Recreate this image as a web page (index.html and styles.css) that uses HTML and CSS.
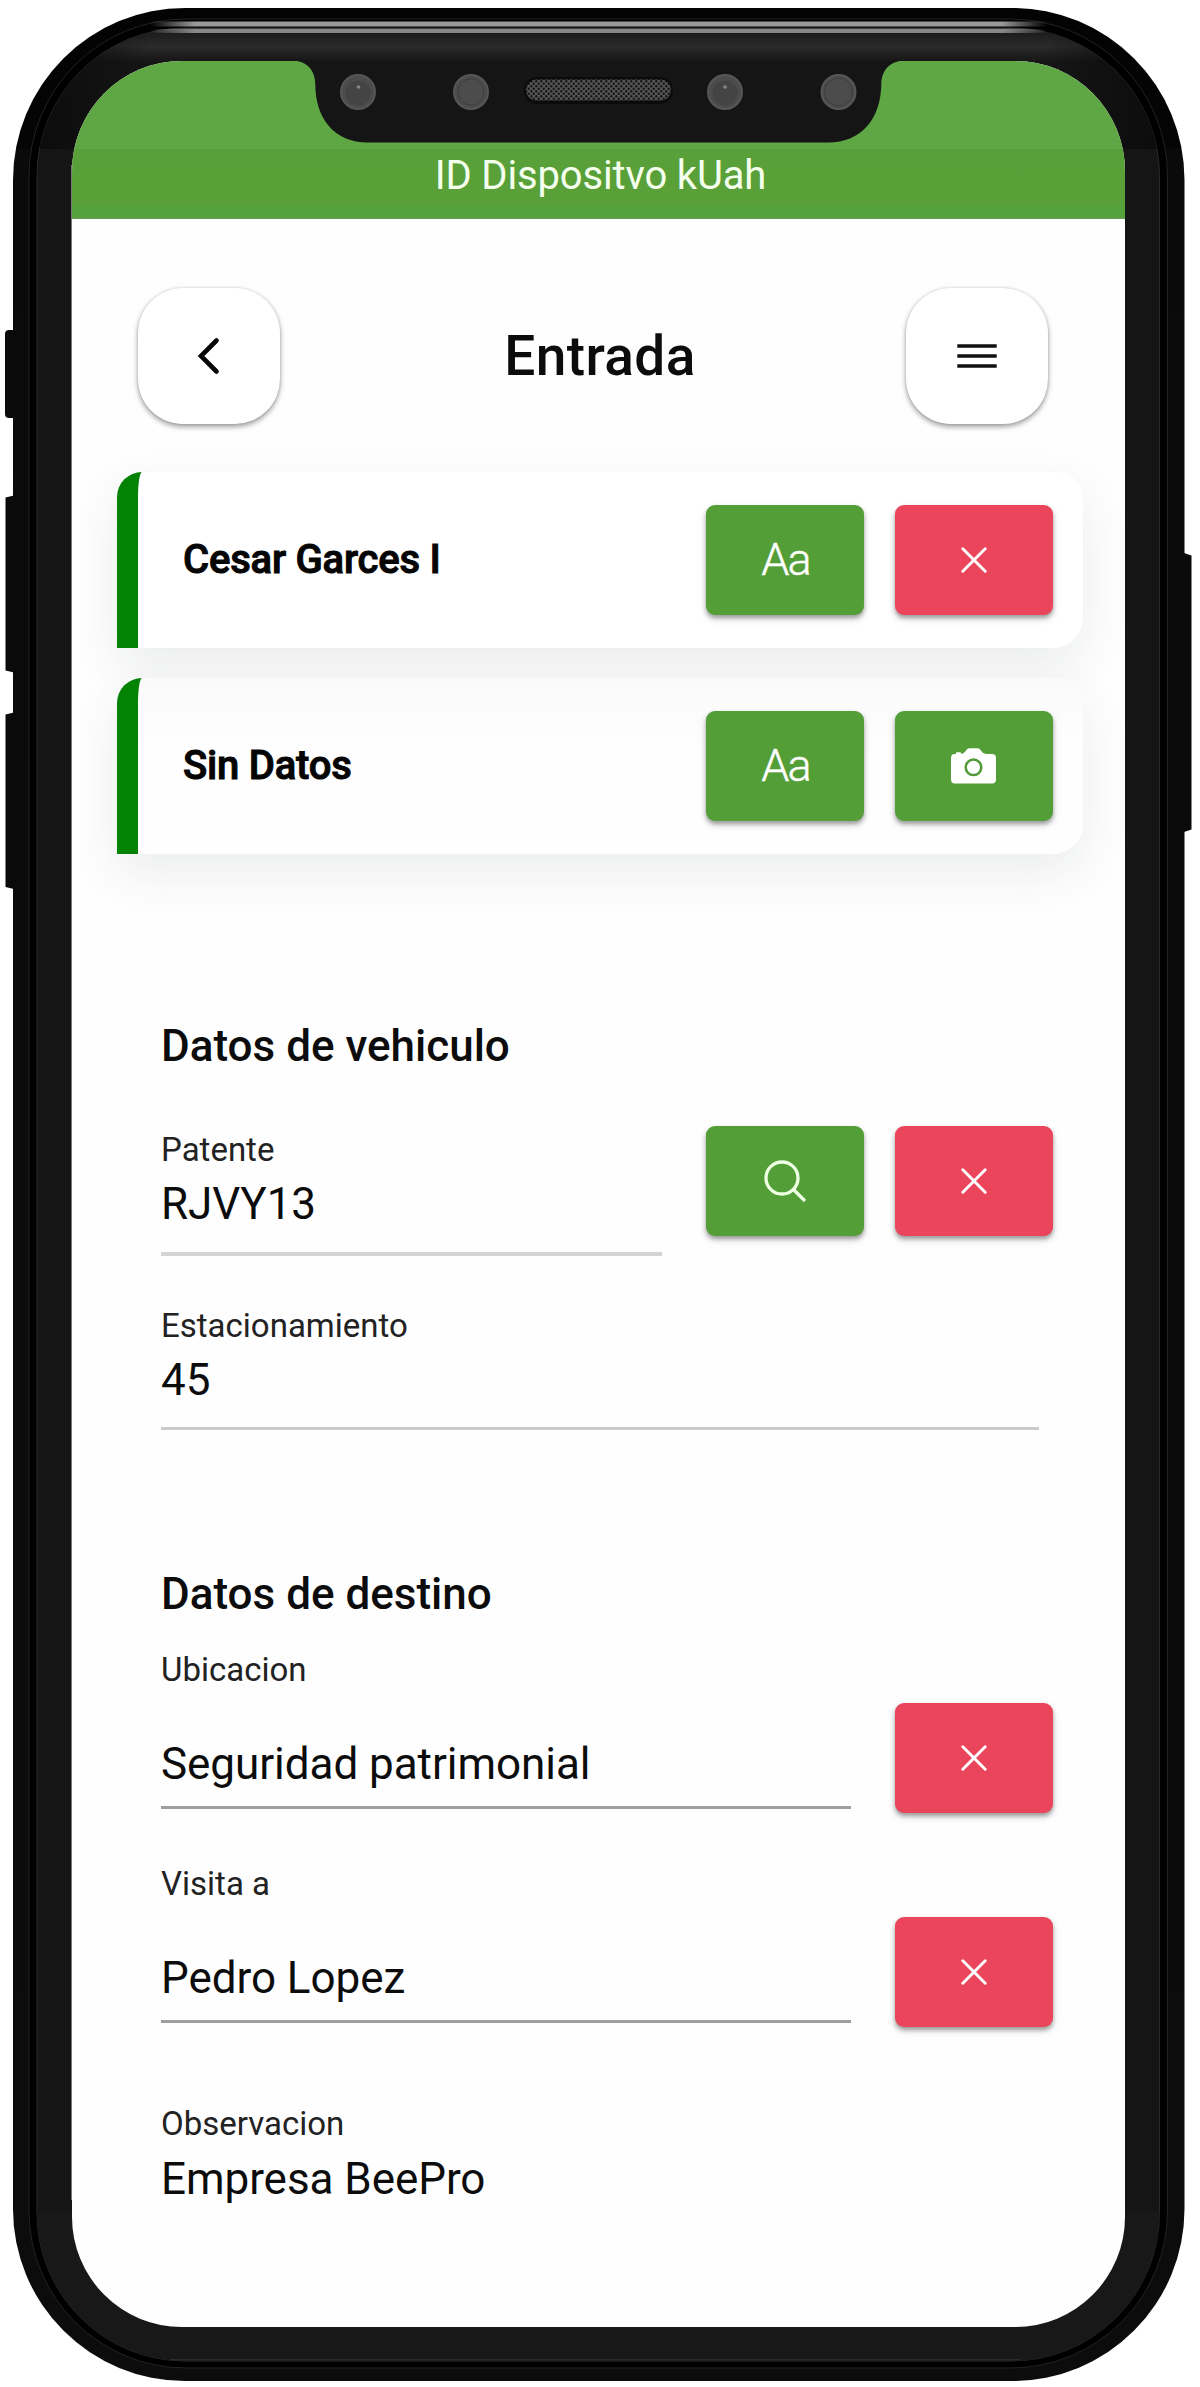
FILE: index.html
```html
<!DOCTYPE html>
<html lang="es">
<head>
<meta charset="utf-8">
<title>Entrada</title>
<link rel="stylesheet" href="styles.css">
</head>
<body>
<svg class="defs" aria-hidden="true">
  <symbol id="close" viewBox="0 0 26 26"><path d="M1.8 1.8 24.2 24.2M24.2 1.8 1.8 24.2" fill="none" stroke="currentColor" stroke-width="2.9" stroke-linecap="round"/></symbol>
</svg>
<div class="phone">
  <svg class="frame" viewBox="0 0 1200 2387" aria-hidden="true">
    <defs>
      <linearGradient id="shine" x1="0" x2="1" y1="0" y2="0"><stop offset="0" stop-color="#999" stop-opacity="0"/><stop offset=".05" stop-color="#999"/><stop offset=".95" stop-color="#999"/><stop offset="1" stop-color="#999" stop-opacity="0"/></linearGradient>
      <linearGradient id="bezel" x1="0" x2="0" y1="0" y2="1"><stop offset="0" stop-color="#444"/><stop offset=".13" stop-color="#1c1c1c"/><stop offset=".5" stop-color="#2b2b2b"/><stop offset=".95" stop-color="#151515"/><stop offset="1" stop-color="#151515"/></linearGradient>
      <linearGradient id="fade" x1="0" x2="1" y1="0" y2="0"><stop offset="0" stop-color="#0c0c0c"/><stop offset=".1" stop-color="#0c0c0c" stop-opacity="0"/><stop offset=".9" stop-color="#0c0c0c" stop-opacity="0"/><stop offset="1" stop-color="#0c0c0c"/></linearGradient>
      <linearGradient id="shell" gradientUnits="userSpaceOnUse" x1="0" x2="0" y1="8" y2="2381"><stop offset="0" stop-color="#030303"/><stop offset=".059" stop-color="#050505"/><stop offset=".0595" stop-color="#0a0a0a"/><stop offset="1" stop-color="#0c0c0c"/></linearGradient>
      <clipPath id="inner"><rect x="37" y="28" width="1122.500" height="2333" rx="148"/></clipPath>
    </defs>
    <rect x="5" y="330" width="14" height="88" rx="4" fill="#0b0b0b"/>
    <path d="M14 495.500 5.500 497.500V670.500L14 672.500zM14 712.500 5.500 714.500V887L14 889zM1184 553 1191.500 555.500V829.500L1184 832z" fill="#0a0a0a"/>
    <rect x="13" y="8" width="1171.500" height="2373" rx="172" fill="url(#shell)"/>
    <rect x="29" y="19" width="1138.500" height="2349" rx="157" fill="#000" stroke="#222"/>
    <rect x="37" y="28" width="1122.500" height="2333" rx="148" fill="#151515" stroke="#2a2a2a"/>
    <g clip-path="url(#inner)">
      <rect x="37" y="28" width="1123" height="36" fill="url(#bezel)"/>
      <rect x="37" y="28" width="1123" height="121" fill="url(#fade)"/>
      <rect x="37" y="2211" width="1123" height="150" fill="#181818"/>
      <rect x="170" y="2359" width="850" height="1.500" fill="#2c2c2c"/>
    </g>
    <rect x="150" y="21.500" width="897" height="5" fill="url(#shine)"/>
    <rect x="150" y="29" width="897" height="4" fill="url(#shine)" opacity=".85"/>
    <path d="M71.500 165V2200" stroke="#777" stroke-width="1"/>
  </svg>
  <main class="screen">
    <header class="device">ID Dispositvo kUah</header>
    <div class="toolbar">
      <button class="round" aria-label="Volver"><svg width="30" height="44" viewBox="0 0 30 44"><path d="M22.500 6.500 7 22 22.500 37.500" fill="none" stroke="#080808" stroke-width="4.600" stroke-linecap="round"/></svg></button>
      <h1>Entrada</h1>
      <button class="round" aria-label="Menu"><svg width="40" height="26" viewBox="0 0 40 26"><path d="M.3 3H39.700M.3 13H39.700M.3 23H39.700" stroke="#111" stroke-width="3.700"/></svg></button>
    </div>
    <section class="people">
      <article class="card">
        <span class="name">Cesar Garces I</span>
        <button class="btn green">Aa</button>
        <button class="btn red" aria-label="Quitar"><svg class="x"><use href="#close"/></svg></button>
      </article>
      <article class="card">
        <span class="name">Sin Datos</span>
        <button class="btn green">Aa</button>
        <button class="btn green" aria-label="Foto"><svg width="45" height="36" viewBox="0 0 45 36"><path d="M3.500 6H5V4.800Q5 4.200 5.600 4.200H9.400Q10 4.200 10 4.800V6Q13 5.500 14.500 3.300L16 1.300Q17 .3 18.500 .3H26.500Q28 .3 29 1.300L30.500 3.300Q32.200 6 35 6H41Q45 6 45 10V31.500Q45 35.500 41 35.500H4Q0 35.500 0 31.500V10Q0 6 3.500 6z" fill="#fff"/><circle cx="22.500" cy="19.300" r="7.800" fill="#fff" stroke="#52993a" stroke-width="2.500"/></svg></button>
      </article>
    </section>
    <section class="form">
      <h2>Datos de vehiculo</h2>
      <div class="row plate">
        <div class="field soft"><label>Patente</label><div class="value">RJVY13</div></div>
        <button class="btn green" aria-label="Buscar"><svg width="42" height="42" viewBox="0 0 42 42"><g fill="none" stroke="#eeffe4" stroke-width="3.300" stroke-linecap="round"><circle cx="18" cy="18" r="16"/><path d="M29.500 29.500 40 40"/></g></svg></button>
        <button class="btn red" aria-label="Borrar"><svg class="x"><use href="#close"/></svg></button>
      </div>
      <div class="field parking"><label>Estacionamiento</label><div class="value">45</div></div>
      <h2 class="second">Datos de destino</h2>
      <label class="above">Ubicacion</label>
      <div class="row">
        <div class="field strong"><div class="value">Seguridad patrimonial</div></div>
        <button class="btn red" aria-label="Borrar"><svg class="x"><use href="#close"/></svg></button>
      </div>
      <label class="above visit">Visita a</label>
      <div class="row">
        <div class="field strong"><div class="value">Pedro Lopez</div></div>
        <button class="btn red" aria-label="Borrar"><svg class="x"><use href="#close"/></svg></button>
      </div>
      <div class="note"><label>Observacion</label><div class="value">Empresa BeePro</div></div>
    </section>
  </main>
  <svg class="notch" width="570" height="82" viewBox="310 61 570 82" aria-hidden="true">
    <defs><pattern id="mesh" width="5" height="5" patternUnits="userSpaceOnUse"><rect width="5" height="5" fill="#555"/><circle cx="1.250" cy="1.250" r="1.200" fill="#151515"/><circle cx="3.750" cy="3.750" r="1.200" fill="#151515"/></pattern></defs>
    <path d="M292 60.500C308 61 315 71 315.300 84C315.300 118 334 142.500 368 142.500H828C862 142.500 881 118 881.300 84C881.600 71 889 61 905 60.500z" fill="#151515"/>
    <g fill="#4c4c4c" stroke="#565656" stroke-width="2"><circle cx="358" cy="92" r="17"/><circle cx="471" cy="92" r="17"/><circle cx="725" cy="92" r="17"/><circle cx="838.500" cy="92" r="17"/></g>
    <g fill="#444"><circle cx="358" cy="93" r="12.500"/><circle cx="725" cy="93" r="12.500"/></g>
    <g fill="none" stroke="#3e3e3e"><circle cx="471" cy="92" r="13"/><circle cx="838.500" cy="92" r="14"/></g>
    <g fill="#888"><circle cx="358.500" cy="87" r="1.800"/><circle cx="725" cy="87" r="1.800"/></g>
    <rect x="524" y="77" width="149" height="27" rx="13" fill="#0b0b0b"/>
    <rect x="526" y="79.500" width="145" height="21" rx="10.500" fill="url(#mesh)"/>
  </svg>
</div>
</body>
</html>
```
FILE: styles.css
```css
* { box-sizing: border-box; }

body {
  margin: 0;
  background: #fff;
  font-family: Roboto, "Liberation Sans", sans-serif;
  color: #0c0c0c;
}

.defs { position: absolute; width: 0; height: 0; }

.phone {
  position: relative;
  width: 1200px;
  height: 2387px;
  padding: 61px 75px 60px 72px;
}

.frame { position: absolute; inset: 0; width: 1200px; height: 2387px; }
.notch { position: absolute; left: 310px; top: 61px; overflow: visible; }

.screen {
  position: relative;
  height: 2266px;
  border-radius: 110px;
  background: #fefefe;
  overflow: hidden;
}

.device {
  height: 158px;
  padding-top: 94px;
  background: linear-gradient(#5fa645 88px, #5aa03a 88px, #5aa038 144px, #54a23c 146px, #54a23c 155px, #6a9a4c);
  color: #f4ffee;
  font-size: 40px;
  line-height: 42px;
  letter-spacing: -.15px;
  text-align: center;
  text-indent: 4px;
}

.toolbar {
  display: flex;
  justify-content: space-between;
  align-items: center;
  margin: 69px 77px 0 66px;
  height: 136px;
}

h1, h2 { margin: 0; font-weight: 500; }
h1 { padding-left: 14px; font-size: 55px; line-height: 64px; letter-spacing: .4px; }
h2 { font-size: 44px; line-height: 52px; }

button {
  display: flex;
  align-items: center;
  justify-content: center;
  border: 0;
  padding: 0;
  font-family: inherit;
}

.round {
  width: 142px;
  height: 136px;
  border-radius: 45px;
  background: #fff;
  box-shadow: 0 3px 5px rgba(0, 0, 0, .32), 0 0 3px rgba(0, 0, 0, .14), 0 2px 10px rgba(0, 0, 0, .06);
}

.people {
  display: flex;
  flex-direction: column;
  gap: 30px;
  margin: 48px 42px 0 45px;
}

.card {
  display: flex;
  align-items: center;
  height: 176px;
  padding: 0 30.5px 0 45px;
  border-left: 21px solid #048204;
  border-radius: 25px 26px 30px 0;
  background: #fff;
  box-shadow: 0 18px 50px rgba(40, 50, 70, .09);
}
.card + .card { background: linear-gradient(#fafafa, #fefefe 40%); }

.name {
  flex: 1;
  font-size: 40px;
  font-weight: 500;
  line-height: 48px;
  letter-spacing: -.2px;
  color: #050505;
  -webkit-text-stroke: 1px #050505;
}

.btn {
  flex: none;
  width: 158px;
  height: 110px;
  border-radius: 9px;
  color: #fff;
  font-size: 45px;
  font-weight: 300;
  letter-spacing: -2px;
  line-height: 50px;
  text-indent: 2px;
  box-shadow: 0 3px 4px rgba(0, 0, 0, .32), 0 4px 8px rgba(0, 0, 0, .12);
  -webkit-text-stroke: .4px #fff;
}
.btn + .btn { margin-left: 31px; }
.green { background: #549e37; }
.red { background: #eb455b; }
.x { width: 26px; height: 26px; }

.form { margin: 166px 72.5px 0 89px; }

label { display: block; font-size: 33px; line-height: 40px; color: #222; }
.value { font-size: 44px; line-height: 52px; letter-spacing: -.05px; }

.row { display: flex; align-items: flex-start; height: 110px; }
.field { flex: 1; }

.plate { height: 130px; margin-top: 54px; }
.soft {
  margin-right: 44px;
  padding: 4px 0 22px;
  border-bottom: 4px solid #d4d4d4;
}
.soft .value, .parking .value { margin-top: 8px; }

.parking {
  margin: 50px 14px 0 0;
  padding-bottom: 21px;
  border-bottom: 3px solid #cbcbcb;
}

.second { margin-top: 138px; }
.above { margin: 30px 0 13px; }
.visit { margin: 51px 0 13px; }

.strong {
  margin-right: 44px;
  padding: 35px 0 16px;
  border-bottom: 3px solid #9e9e9e;
}

.note { margin-top: 77px; }
.note .value { margin-top: 9px; }
```
